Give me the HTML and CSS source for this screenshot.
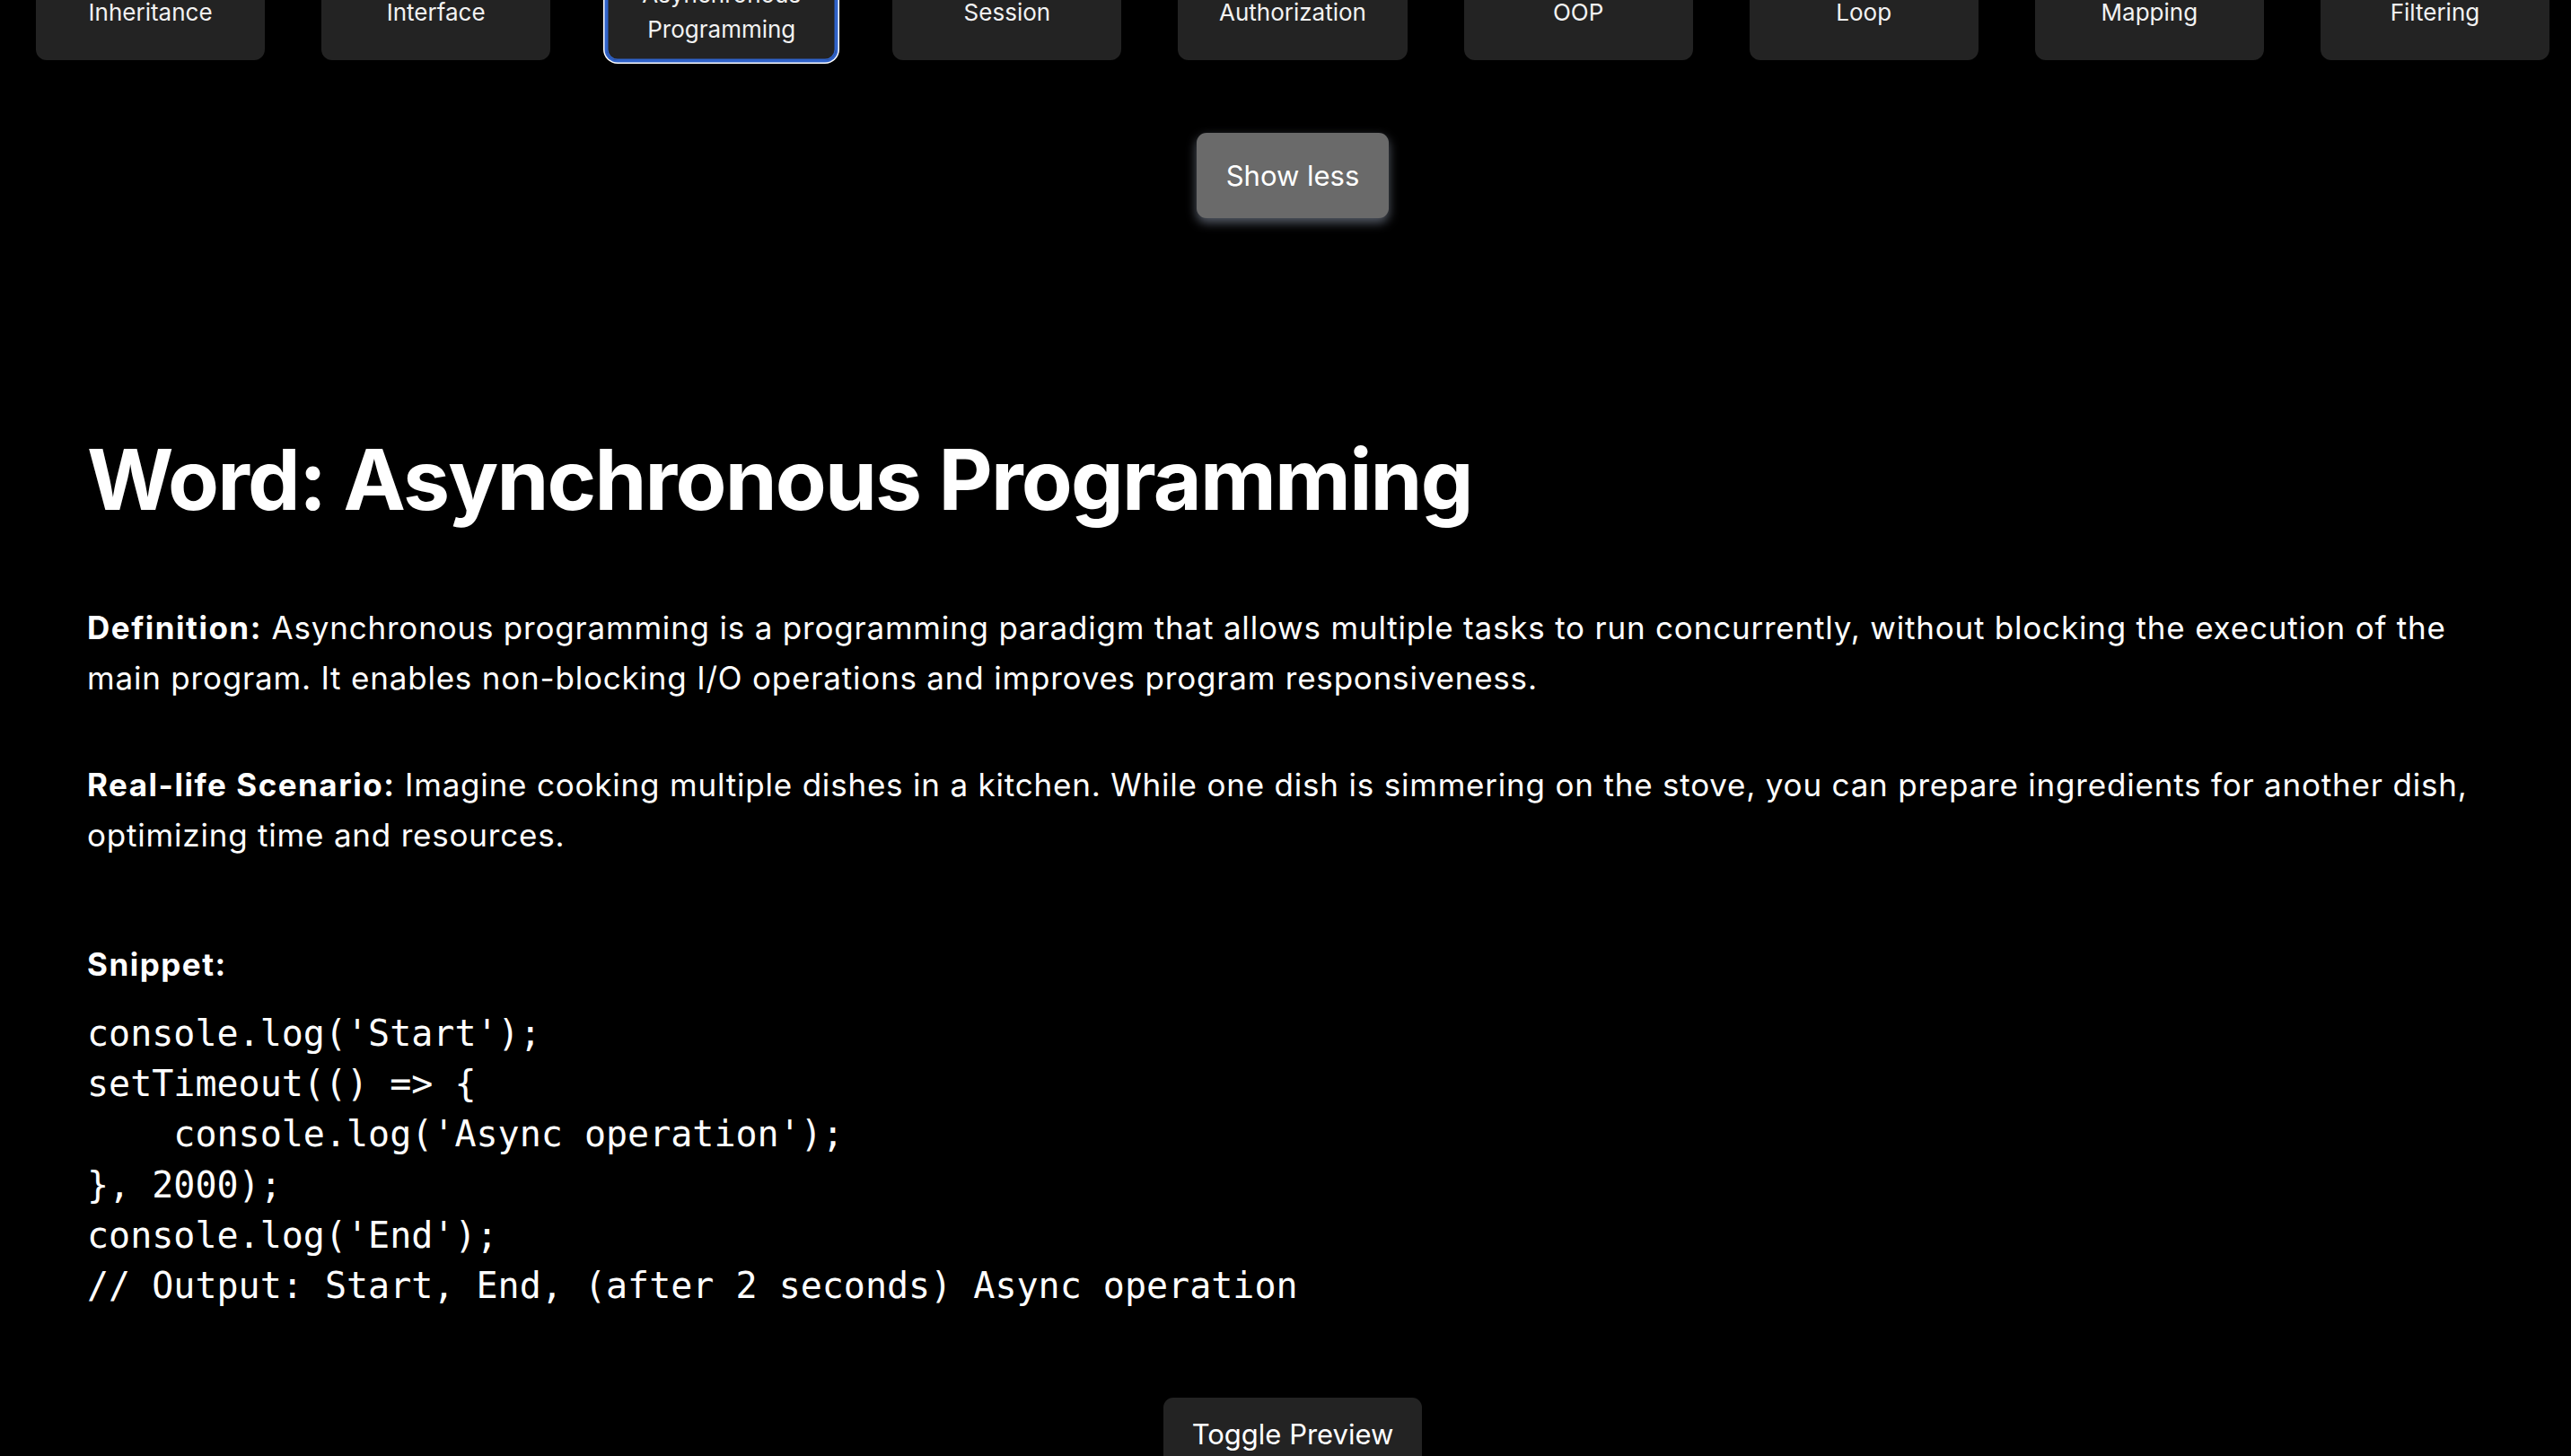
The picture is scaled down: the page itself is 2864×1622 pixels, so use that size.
FILE: index.html
```html
<!DOCTYPE html>
<html lang="en">
<head>
<meta charset="utf-8">
<title>Programming Words</title>
<link rel="stylesheet" href="styles.css">
</head>
<body>
<div class="page">
  <div class="tiles">
    <div class="tile">Inheritance</div>
    <div class="tile">Interface</div>
    <div class="tile active">Asynchronous Programming</div>
    <div class="tile">Session</div>
    <div class="tile">Authorization</div>
    <div class="tile">OOP</div>
    <div class="tile">Loop</div>
    <div class="tile">Mapping</div>
    <div class="tile">Filtering</div>
  </div>
  <div class="center">
    <button class="show-less">Show less</button>
  </div>
  <section class="detail">
    <h1 class="word">Word: Asynchronous Programming</h1>
    <p class="para"><strong>Definition:</strong> Asynchronous programming is a programming paradigm that allows multiple tasks to run concurrently, without blocking the execution of the main program. It enables non-blocking I/O operations and improves program responsiveness.</p>
    <p class="para para-2"><strong>Real-life Scenario:</strong> Imagine cooking multiple dishes in a kitchen. While one dish is simmering on the stove, you can prepare ingredients for another dish, optimizing time and resources.</p>
    <h3 class="snippet-label">Snippet:</h3>
    <pre class="code">console.log('Start');
setTimeout(() =&gt; {
    console.log('Async operation');
}, 2000);
console.log('End');
// Output: Start, End, (after 2 seconds) Async operation</pre>
  </section>
  <div class="center">
    <button class="toggle">Toggle Preview</button>
  </div>
</div>
</body>
</html>
```

FILE: styles.css
```css
html, body {
  margin: 0;
  padding: 0;
  background: #000;
}
body {
  color: #fff;
  font-family: Inter, "Noto Sans", "Liberation Sans", sans-serif;
  overflow: hidden;
  height: 1622px;
}
.page {
  padding: 0 24px 0 40px;
}
.tiles {
  display: grid;
  grid-template-columns: repeat(9, 1fr);
  column-gap: 63px;
  margin-top: -41px;
}
.tile {
  background: #232323;
  border-radius: 12px;
  padding: 15px 10px;
  font-size: 26px;
  line-height: 39px;
  text-align: center;
  display: flex;
  align-items: center;
  justify-content: center;
  color: #f2f2f2;
}
.tile.active {
  box-shadow: inset 0 0 0 1.5px #2f62c9, 0 0 0 2.5px #2f62c9, 0 0 0 4px #fff;
}
.center {
  display: flex;
  justify-content: center;
}
.show-less {
  margin-top: 81px;
  background: #6a6a6a;
  color: #fff;
  border: none;
  border-radius: 11px;
  font-family: inherit;
  font-size: 31px;
  line-height: 47px;
  padding: 24px 33px;
  box-shadow: 0 5px 12px rgba(190, 205, 230, 0.45);
}
.detail {
  padding: 0 57px;
}
.word {
  margin: 235px 0 0;
  font-size: 93px;
  line-height: 112px;
  font-weight: 700;
  letter-spacing: -1.8px;
}
.para {
  margin: 81px 0 0;
  font-size: 35px;
  line-height: 56px;
  letter-spacing: 0.8px;
}
.para strong {
  font-weight: 700;
  letter-spacing: 1.5px;
}
.para-2 {
  margin-top: 63px;
}
.snippet-label {
  margin: 94px 0 0;
  font-size: 35px;
  line-height: 45px;
  font-weight: 700;
  letter-spacing: 1.5px;
}
.code {
  margin: 26px 0 0;
  font-family: "DejaVu Sans Mono", "Liberation Mono", monospace;
  font-size: 40px;
  line-height: 56.2px;
}
.toggle {
  margin-top: 97px;
  background: #232323;
  color: #fff;
  border: none;
  border-radius: 11px;
  font-family: inherit;
  font-size: 31px;
  line-height: 47px;
  padding: 17px 32px;
}
```
